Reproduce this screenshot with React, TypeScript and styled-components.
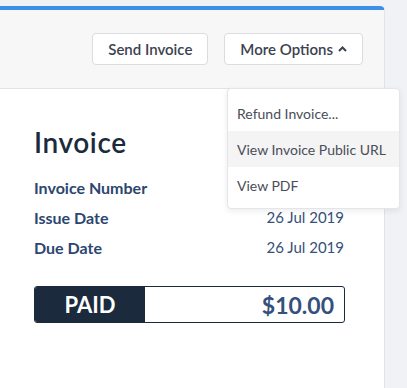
import React from "react";
import styled, { createGlobalStyle } from "styled-components";

const GlobalStyle = createGlobalStyle`
  html, body {
    margin: 0;
    padding: 0;
    background: #f1f2f6;
    font-family: Lato, "Open Sans", sans-serif;
  }
`;

const Page = styled.div`
  width: 407px;
  height: 388px;
  padding-top: 6px;
  box-sizing: border-box;
  overflow: hidden;
  position: relative;
`;

const Card = styled.div`
  width: 385px;
  height: 400px;
  background: #fff;
  border-top: 4px solid #3b8fe6;
  border-right: 1px solid #e1e3e8;
  border-top-right-radius: 5px;
  box-sizing: border-box;
`;

const Header = styled.div`
  height: 79px;
  background: #f7f7f7;
  border-bottom: 1px solid #e3e3e3;
  display: flex;
  align-items: center;
  justify-content: flex-end;
  gap: 16px;
  padding-right: 21px;
  box-sizing: border-box;
`;

const Button = styled.button`
  height: 32px;
  padding: 0 15px;
  display: flex;
  align-items: center;
  gap: 5px;
  background: #fff;
  border: 1px solid #dadce0;
  border-radius: 4px;
  font-family: Lato, sans-serif;
  font-size: 15px;
  font-weight: 600;
  color: #3b4250;
  cursor: pointer;
`;

const Body = styled.div`
  padding: 36px 40px 0 34px;
`;

const Title = styled.h1`
  margin: 0 0 13px;
  font-size: 28px;
  font-weight: 600;
  letter-spacing: 0.6px;
  line-height: 34px;
  color: #1b2a3d;
`;

const Row = styled.div`
  display: flex;
  justify-content: space-between;
  align-items: center;
  height: 30px;
`;

const Label = styled.span`
  font-size: 16px;
  font-weight: 700;
  color: #2c4670;
`;

const Value = styled.span`
  font-size: 15px;
  color: #36507a;
`;

const Status = styled.div`
  margin-top: 24px;
  display: flex;
  height: 37px;
  width: 311px;
  border: 1px solid #1b2a3d;
  border-radius: 3px;
  box-sizing: border-box;
  overflow: hidden;
`;

const StatusLabel = styled.div`
  width: 110px;
  background: #1b2a3d;
  color: #fff;
  display: flex;
  align-items: center;
  justify-content: center;
  font-size: 22px;
  font-weight: 700;
`;

const Amount = styled.div`
  flex: 1;
  display: flex;
  align-items: center;
  justify-content: flex-end;
  padding-right: 10px;
  font-size: 23px;
  font-weight: 700;
  color: #34507c;
`;

const Menu = styled.div`
  position: absolute;
  left: 227px;
  top: 88px;
  width: 173px;
  padding: 6px 0 5px;
  background: #fff;
  border: 1px solid #e4e5e8;
  border-radius: 4px;
  box-shadow: 0 2px 6px rgba(0, 0, 0, 0.08);
  box-sizing: border-box;
`;

const MenuItem = styled.div<{ $active?: boolean }>`
  height: 36px;
  display: flex;
  align-items: center;
  padding-left: 9px;
  font-size: 14px;
  color: #4a4d57;
  background: ${(p) => (p.$active ? "#f4f4f5" : "transparent")};
`;

const Chevron = () => (
  <svg width="9" height="6" viewBox="0 0 9 6">
    <path d="M1 5 L4.5 1.5 L8 5" fill="none" stroke="#3b4250" strokeWidth="2" />
  </svg>
);

export default function App() {
  return (
    <>
      <GlobalStyle />
      <Page>
        <Card>
          <Header>
            <Button>Send Invoice</Button>
            <Button>
              More Options <Chevron />
            </Button>
          </Header>
          <Body>
            <Title>Invoice</Title>
            <Row>
              <Label>Invoice Number</Label>
            </Row>
            <Row>
              <Label>Issue Date</Label>
              <Value>26 Jul 2019</Value>
            </Row>
            <Row>
              <Label>Due Date</Label>
              <Value>26 Jul 2019</Value>
            </Row>
            <Status>
              <StatusLabel>PAID</StatusLabel>
              <Amount>$10.00</Amount>
            </Status>
          </Body>
        </Card>
        <Menu>
          <MenuItem>Refund Invoice...</MenuItem>
          <MenuItem $active>View Invoice Public URL</MenuItem>
          <MenuItem>View PDF</MenuItem>
        </Menu>
      </Page>
    </>
  );
}
